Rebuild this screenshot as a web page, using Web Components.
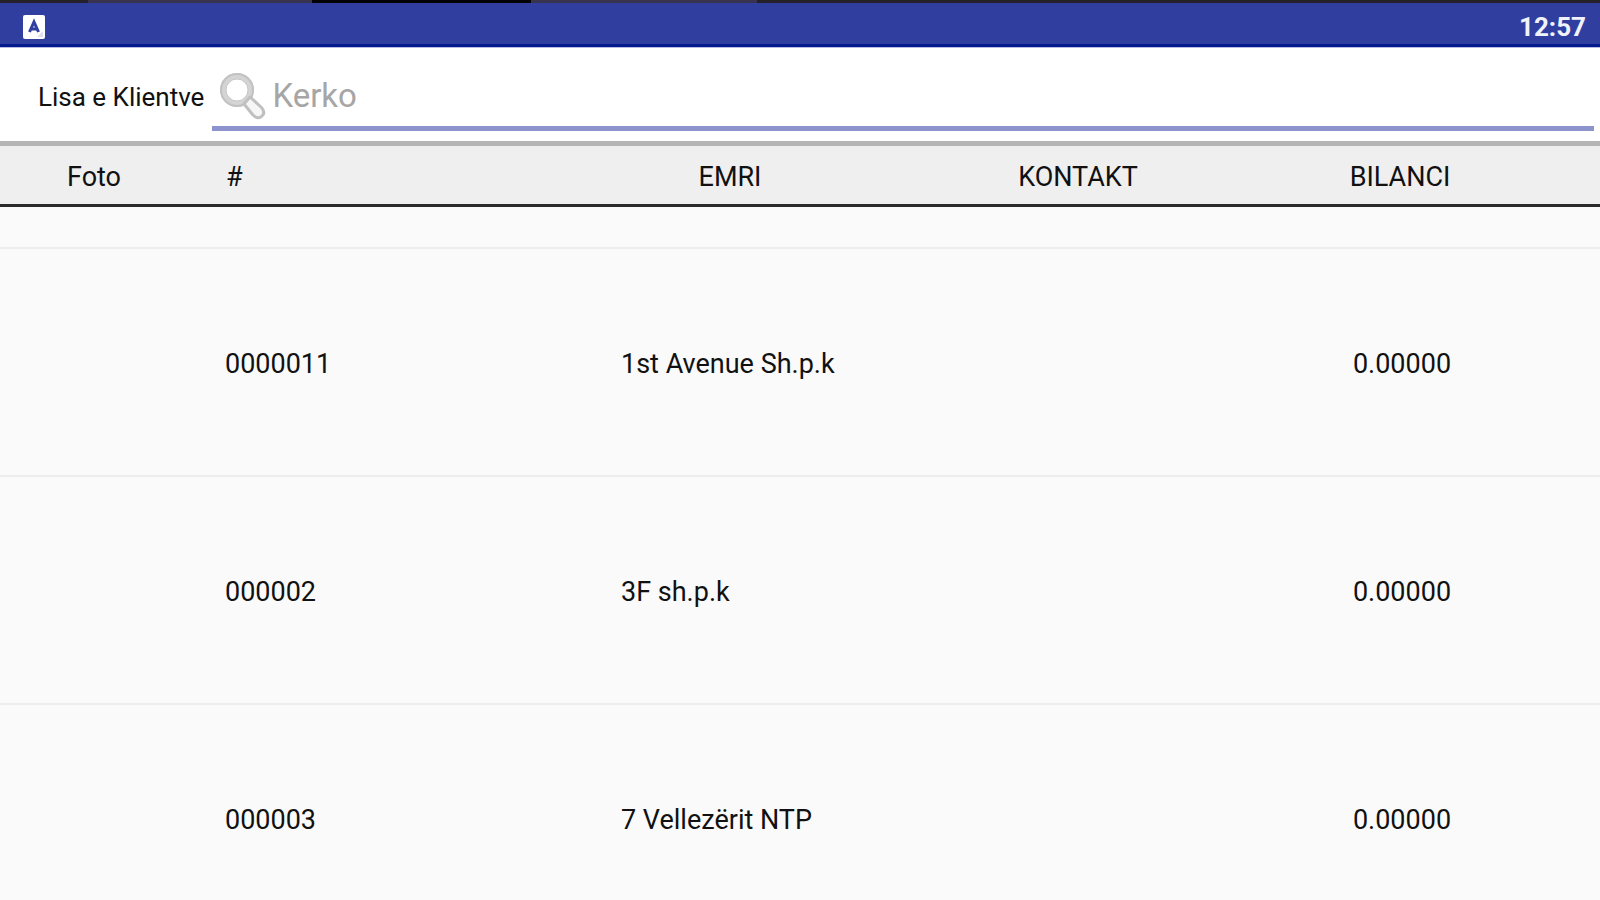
<!DOCTYPE html>
<html lang="sq">
<head>
<meta charset="utf-8">
<meta name="viewport" content="width=device-width, initial-scale=1">
<title>Lisa e Klientve</title>
<style>
  body {
    margin: 0;
    font-family: Roboto, "Liberation Sans", sans-serif;
    font-size: 27px;
    line-height: 32px;
    color: #111;
    background: #fafafa;
  }
</style>
</head>
<body>
<client-app></client-app>

<script>
const statusTemplate = document.createElement("template");
statusTemplate.innerHTML = `
  <style>
    :host {
      display: block;
      color: #f0f2fc;
      background: #303f9f;
    }
    .edge {
      height: 3px;
      background: linear-gradient(90deg,
        #23202c 0 5.5%, #38334f 5.5% 19.5%, #020202 19.5% 33.2%,
        #38334f 33.2% 47.3%, #23202c 47.3%);
    }
    .bar {
      display: flex;
      align-items: center;
      justify-content: space-between;
      height: 41px;
      padding: 6px 14px 0 23px;
      box-sizing: border-box;
      font-size: 26px;
      font-weight: 700;
    }
    .bottom {
      height: 3px;
      background: #001a8e;
      border-bottom: 1px solid #b9bce0;
    }
    svg {
      display: block;
    }
  </style>
  <div class="edge"></div>
  <div class="bar">
    <svg width="22" height="24" viewBox="0 0 22 24" aria-hidden="true">
      <rect width="22" height="24" rx="2" fill="#fff"/>
      <path d="M6.500 17L11 7L15.500 17M8 14H14" fill="none" stroke="#303f9f" stroke-width="3"/>
      <path d="M14 22L20 16V22Z" fill="#dddff0"/>
    </svg>
    <slot></slot>
  </div>
  <div class="bottom"></div>
`;

class StatusBar extends HTMLElement {
  constructor() {
    super();
    this.attachShadow({ mode: "open" });
    this.shadowRoot.appendChild(statusTemplate.content.cloneNode(true));
  }
}

const searchTemplate = document.createElement("template");
searchTemplate.innerHTML = `
  <style>
    :host {
      display: flex;
      align-items: flex-start;
      gap: 8px;
      padding: 14px 6px 10px 38px;
      background: #fff;
      border-bottom: 5px solid #b5b5b5;
    }
    label {
      padding-top: 19px;
      font-size: 26px;
      white-space: nowrap;
    }
    .field {
      flex: 1;
      display: flex;
      align-items: center;
      gap: 6px;
      height: 64px;
      padding: 4px 0 0 8px;
      box-sizing: content-box;
      height: 60px;
      border-bottom: 5px solid #8d93cd;
    }
    input {
      flex: 1;
      min-width: 0;
      padding: 0;
      border: 0;
      outline: 0;
      background: none;
      font: inherit;
      font-size: 33px;
      line-height: 40px;
      color: #111;
    }
    input::placeholder {
      color: #a6a6a6;
      opacity: 1;
    }
    svg {
      flex: none;
    }
  </style>
  <label for="query"><slot></slot></label>
  <div class="field">
    <svg width="46" height="48" viewBox="0 0 46 48" fill="none" aria-hidden="true">
      <circle cx="17" cy="18" r="14" stroke="#d4d4d4" stroke-width="6"/>
      <circle cx="17" cy="18" r="16" stroke="#c2c2c2" stroke-width="2"/>
      <circle cx="17" cy="18" r="11" stroke="#c6c6c6" stroke-width="1"/>
      <path d="M24 32L33 43Q38 48 42 44Q46 40 41 35L30 25Z" fill="#f6f6f6" stroke="#c0c0c0" stroke-width="3" stroke-linejoin="round"/>
    </svg>
    <input id="query" type="text">
  </div>
`;

class SearchBar extends HTMLElement {
  constructor() {
    super();
    this.attachShadow({ mode: "open" });
    this.shadowRoot.appendChild(searchTemplate.content.cloneNode(true));
    this.input = this.shadowRoot.querySelector("input");
    this.input.addEventListener("input", () => {
      this.dispatchEvent(new CustomEvent("search", { detail: this.input.value }));
    });
  }

  connectedCallback() {
    this.input.placeholder = this.getAttribute("placeholder") || "";
  }
}

const tableTemplate = document.createElement("template");
tableTemplate.innerHTML = `
  <style>
    :host {
      display: block;
    }
    table {
      width: 100%;
      table-layout: fixed;
      border-collapse: separate;
      border-spacing: 0;
    }
    .photo { width: 11.75%; }
    .code { width: 19.75%; }
    .name { width: 28.25%; }
    .contact { width: 15.25%; }
    th, td {
      box-sizing: border-box;
      padding: 4px 0 0;
    }
    th {
      height: 61px;
      font-weight: 400;
      background: #efefef;
      border-bottom: 3px solid #2b2b2b;
    }
    th:nth-child(2) {
      text-align: left;
      padding-left: 38px;
    }
    td {
      height: 228px;
      border-bottom: 2px solid #ededed;
    }
    td:nth-child(2) { padding-left: 37px; }
    td:nth-child(3) { padding-left: 117px; }
    td:nth-child(5) {
      text-align: center;
      padding-left: 4px;
    }
    .previous td { height: 42px; }
  </style>
  <table>
    <colgroup>
      <col class="photo"><col class="code"><col class="name"><col class="contact"><col>
    </colgroup>
    <thead>
      <tr><th>Foto</th><th>#</th><th>EMRI</th><th>KONTAKT</th><th>BILANCI</th></tr>
    </thead>
    <tbody></tbody>
  </table>
`;

class ClientTable extends HTMLElement {
  constructor() {
    super();
    this.attachShadow({ mode: "open" });
    this.shadowRoot.appendChild(tableTemplate.content.cloneNode(true));
  }

  set clients(list) {
    const body = this.shadowRoot.querySelector("tbody");
    body.innerHTML = `<tr class="previous"><td colspan="5"></td></tr>`;
    list.forEach((client) => {
      const row = body.insertRow();
      ["", client.code, client.name, client.contact, client.balance].forEach((text) => {
        row.insertCell().textContent = text;
      });
    });
  }
}

const clients = [
  { code: "0000011", name: "1st Avenue Sh.p.k", contact: "", balance: "0.00000" },
  { code: "000002", name: "3F sh.p.k", contact: "", balance: "0.00000" },
  { code: "000003", name: "7 Vellezërit NTP", contact: "", balance: "0.00000" },
];

const appTemplate = document.createElement("template");
appTemplate.innerHTML = `
  <style>
    :host {
      display: flex;
      flex-direction: column;
      height: 100vh;
    }
    status-bar, search-bar {
      flex: none;
    }
    client-table {
      flex: 1;
      min-height: 0;
      overflow-y: auto;
      scrollbar-width: none;
    }
  </style>
  <status-bar>12:57</status-bar>
  <search-bar placeholder="Kerko">Lisa e Klientve</search-bar>
  <client-table></client-table>
`;

class ClientApp extends HTMLElement {
  constructor() {
    super();
    this.attachShadow({ mode: "open" });
    this.shadowRoot.appendChild(appTemplate.content.cloneNode(true));
  }

  connectedCallback() {
    const table = this.shadowRoot.querySelector("client-table");
    table.clients = clients;
    this.shadowRoot.querySelector("search-bar").addEventListener("search", (e) => {
      const query = e.detail.toLowerCase();
      table.clients = clients.filter((c) => (c.code + " " + c.name).toLowerCase().includes(query));
    });
  }
}

window.customElements.define("status-bar", StatusBar);
window.customElements.define("search-bar", SearchBar);
window.customElements.define("client-table", ClientTable);
window.customElements.define("client-app", ClientApp);
</script>
</body>
</html>
